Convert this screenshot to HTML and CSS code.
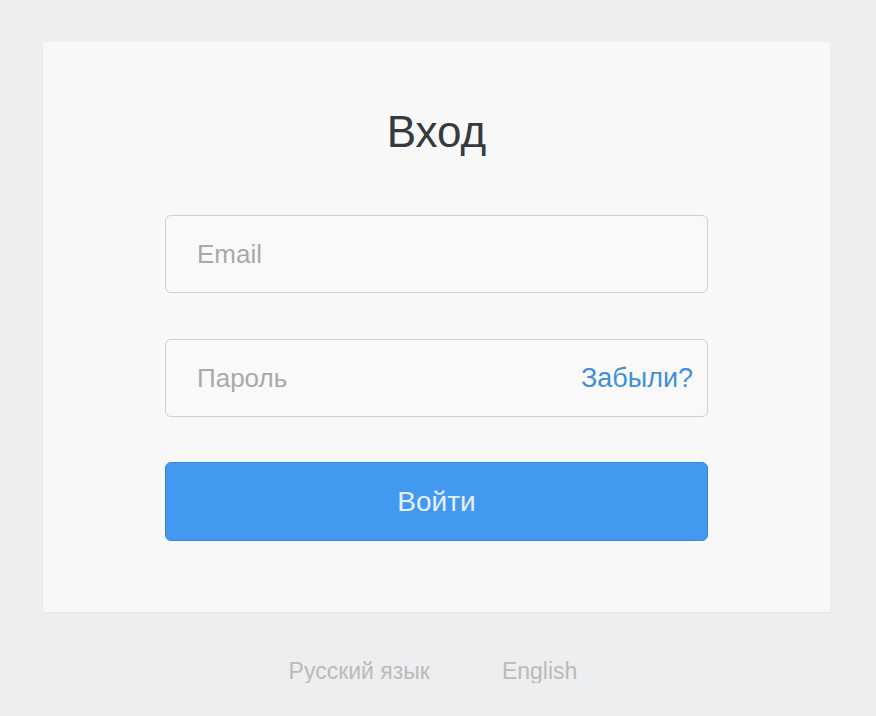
FILE: index.html
```html
<!DOCTYPE html>
<html lang='ru'>

<head>
    <meta charset='utf-8' />
    <meta name='viewport' content='width=device-width, initial-scale=1' />
    <title>Вход</title>
    <link rel="stylesheet" href="styles.css">
</head>

<body>
    <div class='card'>
        <h1 class='title'>Вход</h1>
        <form class='login-form' method='post' action='/'>
            <div class='field'>
                <input type='email' name='email' placeholder='Email'>
            </div>
            <div class='field'>
                <input type='password' name='password' placeholder='Пароль'>
                <a class='forgot' href='#'>Забыли?</a>
            </div>
            <button type='submit' class='btn-primary'>Войти</button>
        </form>
    </div>
    <div class='langs'>
        <a href='#'>Русский язык</a>
        <a href='#'>English</a>
    </div>
</body>

</html>
```

FILE: styles.css
```css
body {
    margin: 0;
    padding-top: 42px;
    background-color: #edeef0;
    font-family: 'Liberation Sans', Arial, sans-serif;
    color: #333;
}

.card {
    width: 787px;
    margin-left: 43px;
    box-sizing: border-box;
    padding: 67px 122px 71px;
    background-color: #f8f8f8;
    box-shadow: 0 1px 2px rgba(0, 0, 0, .04);
}

.title {
    margin: 0 0 60px;
    font-size: 44px;
    font-weight: normal;
    line-height: 46px;
    text-align: center;
    color: #353a40;
}

.login-form {
    display: flex;
    flex-direction: column;
    gap: 46px;
}

.field {
    display: flex;
    align-items: center;
    height: 78px;
    box-sizing: border-box;
    border: 1px solid #cfcfcf;
    border-radius: 6px;
    background-color: #f9f9f9;
    padding: 0 14px 0 31px;
}

.field input {
    flex: 1;
    min-width: 0;
    border: 0;
    padding: 0;
    outline: 0;
    background: transparent;
    font-family: inherit;
    font-size: 26px;
    color: #333;
}

.field input::placeholder {
    color: #a9a9a9;
}

.forgot {
    font-size: 27px;
    color: #3f90d9;
    text-decoration: none;
}

.btn-primary {
    height: 79px;
    margin-top: -1px;
    border: 1px solid #3a88dc;
    border-radius: 6px;
    background-color: #4399f0;
    color: #e6f0fc;
    font-family: inherit;
    font-size: 28px;
    cursor: pointer;
}

.langs {
    display: flex;
    justify-content: center;
    gap: 72px;
    margin-top: 47px;
    padding-right: 10px;
    font-size: 23px;
    line-height: 24px;
}

.langs a {
    color: #bababa;
    text-decoration: none;
}
```
